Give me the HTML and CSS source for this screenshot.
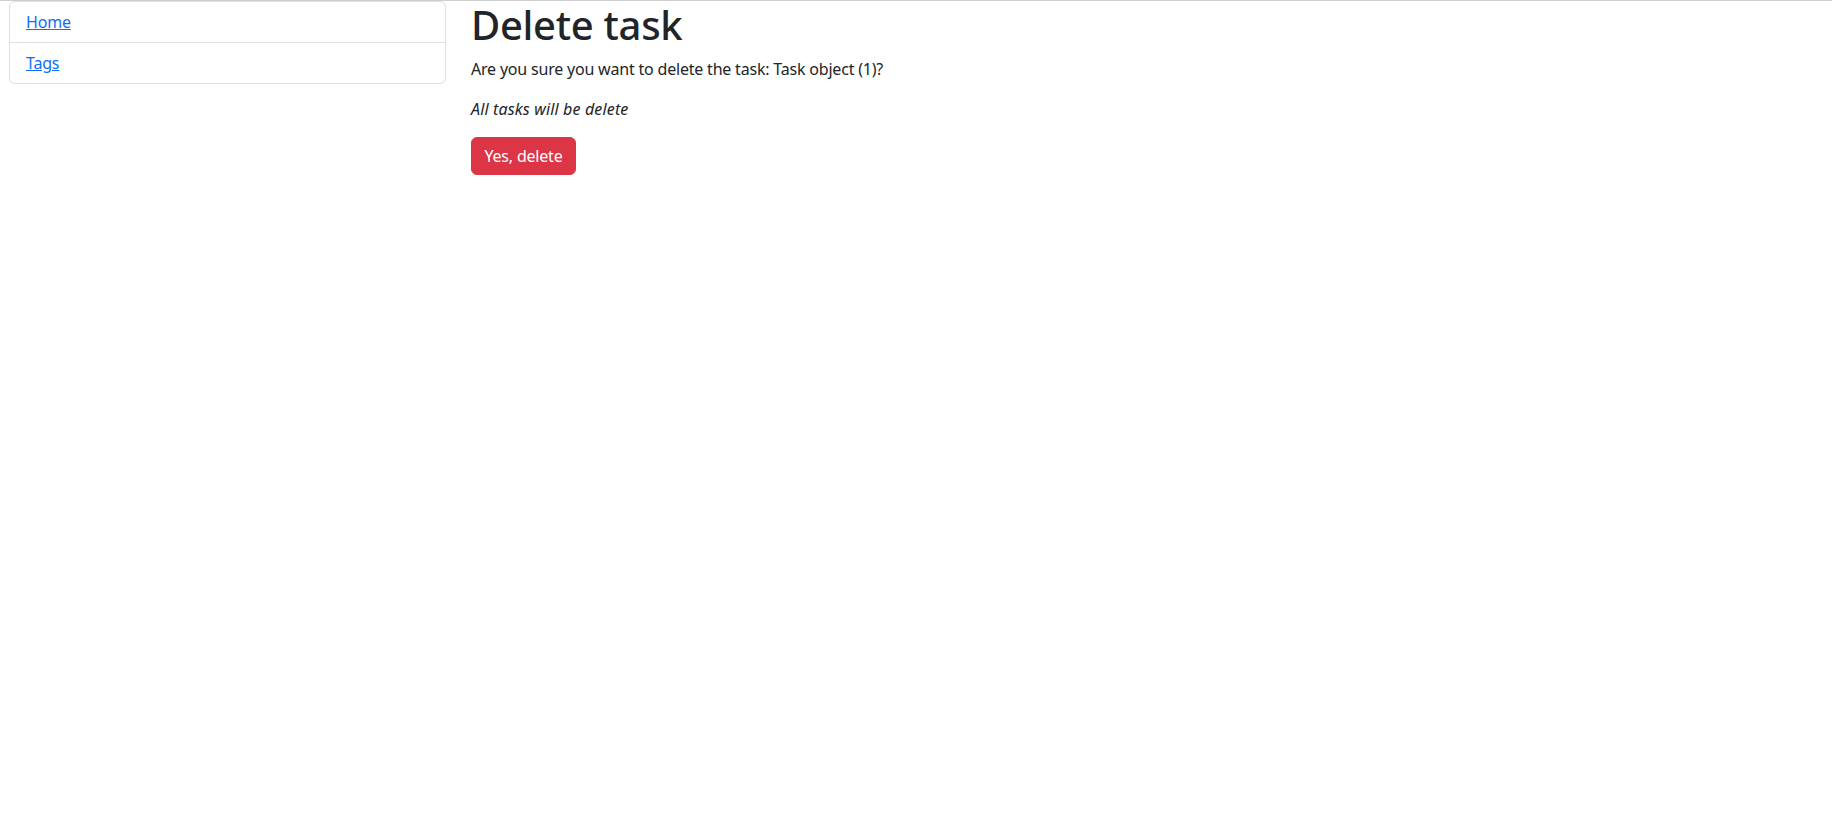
FILE: index.html
```html
<!DOCTYPE html>
<html>
<head>
<meta charset="utf-8">
<title>Delete task</title>
<link rel="stylesheet" href="styles.css">
</head>
<body>
<div class="topline"></div>
<div class="layout">
  <aside class="sidebar">
    <ul class="list-group">
      <li class="list-item"><a href="#">Home</a></li>
      <li class="list-item"><a href="#">Tags</a></li>
    </ul>
  </aside>
  <main class="content">
    <h1 class="title">Delete task</h1>
    <p class="text">Are you sure you want to delete the task: Task object (1)?</p>
    <p class="text"><em class="note">All tasks will be delete</em></p>
    <button class="btn-danger" type="button">Yes, delete</button>
  </main>
</div>
</body>
</html>
```
FILE: styles.css
```css
* { box-sizing: border-box; }
body {
  margin: 0;
  font-family: "Noto Sans", "Open Sans", sans-serif;
  font-size: 16px;
  line-height: 24px;
  color: #212529;
  background: #fff;
}
.topline {
  height: 1px;
  background: #cfcfcf;
}
.layout {
  display: grid;
  grid-template-columns: 437px 1fr;
  column-gap: 25px;
  padding-left: 9px;
}
.list-group {
  list-style: none;
  margin: 0;
  padding: 0;
  border: 1px solid #dfdfdf;
  border-radius: 6px;
}
.list-item {
  padding: 8px 16px;
  letter-spacing: -0.2px;
}
.list-item + .list-item {
  border-top: 1px solid #dfdfdf;
}
.list-item a {
  color: #0d6efd;
  text-decoration: underline;
}
.title {
  margin: 0 0 8px;
  font-size: 40px;
  font-weight: 500;
  line-height: 48px;
  letter-spacing: -0.3px;
}
.text {
  margin: 0 0 16px;
  letter-spacing: -0.2px;
}
.note {
  letter-spacing: 0.15px;
}
.btn-danger {
  font-family: inherit;
  font-size: 16px;
  line-height: 24px;
  letter-spacing: -0.2px;
  color: #fff;
  background: #dc3545;
  border: 1px solid #dc3545;
  border-radius: 6px;
  padding: 6px 12px;
  height: 38px;
  width: 105px;
  cursor: pointer;
}
```
